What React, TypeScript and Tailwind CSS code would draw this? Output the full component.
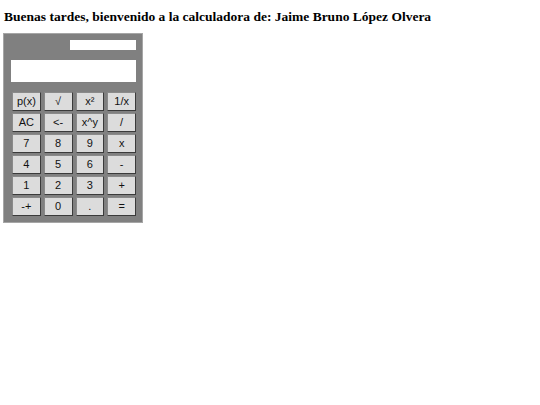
export default function App() {
  const rows = [
    ["p(x)", "√", "x²", "1/x"],
    ["AC", "<-", "x^y", "/"],
    ["7", "8", "9", "x"],
    ["4", "5", "6", "-"],
    ["1", "2", "3", "+"],
    ["-+", "0", ".", "="],
  ];
  return (
    <div className="bg-white w-[540px] h-[405px] px-[4px] pt-[8px]">
      <h3 className="font-['Liberation_Serif',serif] font-bold text-[13.5px] leading-[17px] text-black">
        Buenas tardes, bienvenido a la calculadora de: Jaime Bruno López Olvera
      </h3>
      <div className="mt-[8px] -ml-[1px] w-[140px] h-[190px] bg-[#808080] border border-[#a6a6a6] flex flex-col pt-[6px] pl-[7px] pr-[6px]">
        <div className="flex justify-end">
          <div className="w-[66px] h-[10px] bg-white"></div>
        </div>
        <div className="mt-[10px] w-[125px] h-[22px] bg-white"></div>
        <div className="mt-[10px] ml-[1px] w-[124px] grid grid-cols-4 gap-x-[3px] gap-y-[2px]">
          {rows.flat().map((b, i) => (
            <div
              key={i}
              className="h-[19px] bg-[#dcdcdc] border border-t-[#8a8a8a] border-l-[#8a8a8a] border-r-[#3a3a3a] border-b-[#3a3a3a] flex items-center justify-center font-['Liberation_Sans',sans-serif] text-[11px] text-[#111]"
            >
              {b}
            </div>
          ))}
        </div>
      </div>
    </div>
  );
}
